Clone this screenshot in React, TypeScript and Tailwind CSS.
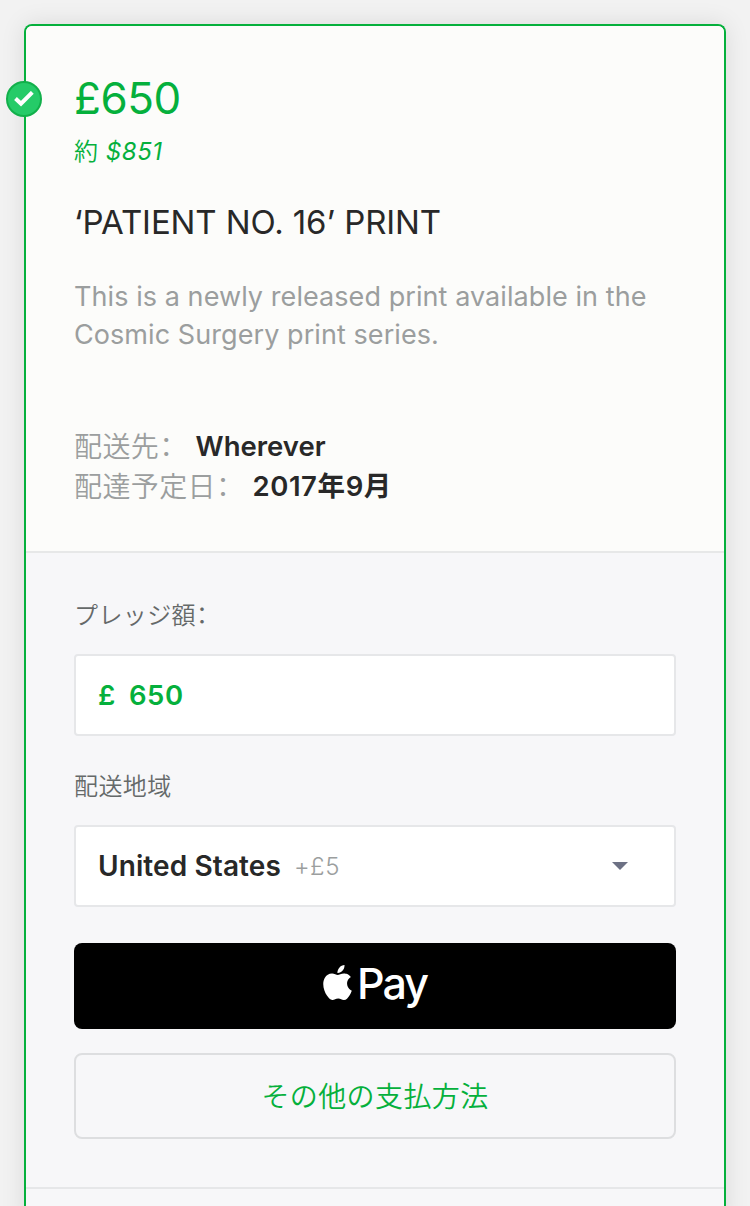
import React from "react";
import { SiApple } from "react-icons/si";

function Colon() {
  return <span className="relative -top-px font-['Noto_Sans_CJK_SC',sans-serif] leading-none" lang="zh-CN">：</span>;
}

export default function App() {
  return (
    <main className="h-[1206px] w-[750px] overflow-hidden bg-[#f2f2f2] px-6 pt-6 font-[Inter,'Noto_Sans_CJK_JP',sans-serif]">
      <section className="relative h-[1200px] rounded-t-lg border-2 border-b-0 border-[#05b03c] bg-[#f7f7f9] shadow-[0_0_24px_rgba(0,0,0,0.1)]">
        <span className="absolute -left-5 top-[55px] flex size-9 items-center justify-center rounded-full border-2 border-[#12b04b] bg-[#25cb68]">
          <svg width="20" height="16" viewBox="0 0 20 16"><path d="m1.5 7.5 5.5 5.2L18.3 1.3" fill="none" stroke="white" strokeWidth="4" /></svg>
        </span>
        <div className="h-[527px] rounded-t-md border-b-2 border-[#e7e8e8] bg-[#fcfcfa] px-12 pt-[44px]">
          <div className="h-[56px] whitespace-nowrap text-[44px] leading-[56px] tracking-[-0.5px] text-[#05b03c]">£650</div>
          <div className="mt-[3px] h-[48px] whitespace-nowrap text-[24px] leading-[46px] tracking-[0.5px] text-[#05b03c]"><span className="font-[350]">約</span> <i className="tracking-[0.6px]">$851</i></div>
          <h1 className="mt-[21px] h-[48px] whitespace-nowrap text-[33px] leading-[48px] tracking-[-0.1px] text-[#282828]">‘PATIENT NO. 16’ PRINT</h1>
          <p className="mt-[32px] whitespace-nowrap text-[27px] leading-[38px] tracking-[0.07px] text-[#9b9e9e]">This is a newly released print available in the<br />Cosmic Surgery print series.</p>
          <div className="mt-[73px] whitespace-nowrap text-[28px] leading-[40px] text-[#9b9e9e]">
            <p className="flex h-[40px]"><span className="mr-2 font-[350] tracking-[0.4px]">配送先<Colon /></span><b className="-mt-px text-[27.5px] font-semibold text-[#282828]">Wherever</b></p>
            <p className="flex h-[40px]"><span className="mr-2 font-[350] tracking-[0.4px]">配達予定日<Colon /></span><b className="-mt-px text-[27.5px] font-semibold tracking-[0.6px] text-[#282828]">2017年9月</b></p>
          </div>
        </div>
        <div className="h-[636px] border-b-2 border-[#e6e7e9] px-12 pt-[43px]">
          <p className="h-[40px] text-[24px] font-[350] leading-[40px] tracking-[0.4px] text-[#656969]">プレッジ額<Colon /></p>
          <div className="mt-[18px] flex h-[82px] items-center rounded border-2 border-[#e6e7e9] bg-white px-[22px] pt-0.5 text-[27.5px] font-semibold tracking-[0.5px] text-[#05b03c]"><span className="w-[31px]">£</span>650</div>
          <p className="mt-[31px] h-[40px] text-[24px] font-[350] leading-[40px] tracking-[0.4px] text-[#656969]">配送地域</p>
          <div className="mt-[18px] flex h-[82px] items-center rounded border-2 border-[#e6e7e9] bg-white pl-[22px] pr-[46px]">
            <span className="text-[28px] font-semibold tracking-[0.1px] text-[#282828]">United States</span>
            <span className="ml-[13px] pt-px text-[24px] font-[350] tracking-[0.5px] text-[#9b9e9e]">+£5</span>
            <svg className="ml-auto" width="16" height="8" viewBox="0 0 16 8"><path d="M0 0h16L8 8z" fill="#6d7184" /></svg>
          </div>
          <button className="mt-[36px] flex h-[86px] w-full items-center justify-center rounded-lg bg-black pb-[7px] pr-[3px] text-white">
            <SiApple className="size-[35px]" />
            <span className="ml-0.5 text-[43px] font-medium leading-[50px] tracking-[-1.9px]">Pay</span>
          </button>
          <button className="mt-[24px] flex h-[86px] w-full items-center justify-center rounded-lg border-2 border-[#dddee0] pt-0.5 text-[28px] font-[350] tracking-[0.4px] text-[#05b03c]">その他の支払方法</button>
        </div>
      </section>
    </main>
  );
}
